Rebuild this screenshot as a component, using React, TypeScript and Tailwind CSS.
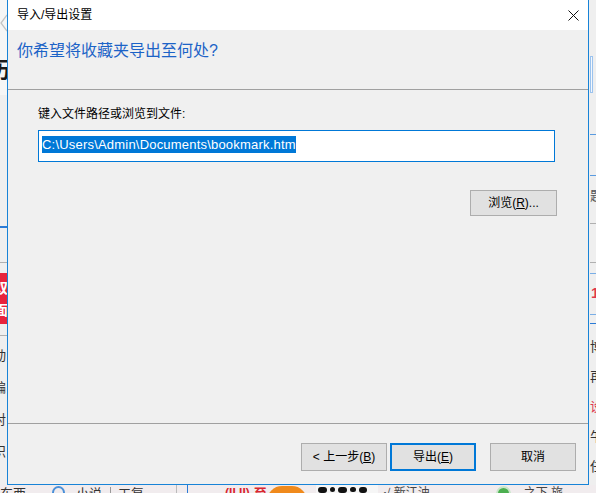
import React from 'react';

const font = "font-['Liberation_Sans','Noto_Sans_CJK_SC',sans-serif]";

// page behind the dialog, left edge
function LeftStrip() {
    return (
        <div className="w-[7px] h-[485px] overflow-hidden flex flex-col bg-[#efefef] shrink-0">
            <div className="h-[95px] bg-[#f6f6f6] flex flex-col pt-[14px]">
                <svg width="7" height="18" viewBox="0 0 7 18">
                    <path d="M7 1 L1 9 L7 17" stroke="#c4c4c4" strokeWidth="1.3" fill="none" />
                </svg>
                <span className="mt-[26px] ml-[-12px] text-[22px] leading-[26px] font-bold text-[#1a1a1a]">历</span>
            </div>
            <div className="mt-[131px] h-[2px] bg-[#2b7bd6]" />
            <div className="mt-[34px] h-px bg-[#b0b0b0]" />
            <div className="mt-[10px] h-[51px] bg-[#e8243c] flex flex-col pt-[6px] gap-[4px] text-[14px] leading-[18px] font-bold text-white">
                <span className="ml-[-6px]">双</span>
                <span className="ml-[-6px]">面</span>
            </div>
            <div className="mt-[11px] h-px bg-[#b0b0b0]" />
            <div className="mt-[12px] ml-[-7px] flex flex-col gap-[17px] text-[13px] leading-[15px] text-[#333]">
                <span>动</span>
                <span>编</span>
                <span>对</span>
                <span>识</span>
            </div>
        </div>
    );
}

// page behind the dialog, right edge
function RightStrip() {
    return (
        <div className="w-[7px] h-[485px] overflow-hidden flex flex-col bg-[#efefef] shrink-0 pl-px">
            <div className="mt-[56px] w-[3px] h-[37px] border border-[#9cc3ee] bg-[#f4f8fd]" />
            <div className="mt-[41px] h-px bg-[#5a9be0]" />
            <div className="mt-[40px] h-px bg-[#5a9be0]" />
            <span className="mt-[12px] text-[13px] leading-[15px] text-[#555]">题</span>
            <div className="mt-[20px] h-px bg-[#b0b0b0]" />
            <div className="mt-[38px] h-px bg-[#b0b0b0]" />
            <div className="mt-[10px] h-px bg-[#7aaee6]" />
            <span className="mt-[10px] ml-px text-[15px] leading-[18px] font-bold text-[#e0384e]">1</span>
            <div className="mt-[12px] h-px bg-[#7aaee6]" />
            <div className="mt-[8px] h-px bg-[#2b7bd6]" />
            <div className="mt-[15px] flex flex-col gap-[15px] text-[13px] leading-[15px] text-[#333]">
                <span>博</span>
                <span>再</span>
                <span className="text-[#e0384e]">设</span>
                <span>午</span>
                <span>任</span>
            </div>
        </div>
    );
}

// page behind the dialog, bottom edge
function BottomStrip() {
    return (
        <div className="h-[8px] bg-[#f1ecee] overflow-hidden flex items-start pt-px text-[13px] leading-[15px] text-[#333]">
            <span>东西</span>
            <div className="ml-[26px] w-[13px] h-[13px] rounded-full border-2 border-[#4a90d9] shrink-0" />
            <span className="ml-[11px]">小说</span>
            <div className="ml-[8px] mt-px w-px h-[8px] bg-[#999] shrink-0" />
            <span className="ml-[7px]">工复</span>
            <div className="ml-[32px] mt-[-1px] w-px h-[8px] bg-[#bbb] shrink-0" />
            <div className="ml-[10px] mt-[-1px] w-px h-[8px] bg-[#2b7bd6] shrink-0" />
            <span className="ml-[37px] text-[12px] leading-[14px] font-bold text-[#d9262f]">(II.II)</span>
            <span className="ml-[4px] font-bold text-[#d9262f]">至</span>
            <div className="w-[40px] h-[30px] rounded-full bg-[#f08a1c] shrink-0" />
            <div className="ml-[9px] mt-[-1px] w-[62px] h-[8px] bg-[#f6f6f6] shrink-0 flex gap-[3px] pt-[2px] pl-[2px]">
                <div className="w-[9px] h-[6px] rounded-full bg-[#111]" />
                <div className="w-[5px] h-[5px] rounded-full bg-[#111]" />
                <div className="w-[9px] h-[6px] rounded-full bg-[#111]" />
                <div className="w-[6px] h-[5px] rounded-full bg-[#111]" />
                <div className="w-[8px] h-[6px] rounded-full bg-[#111]" />
            </div>
            <span className="ml-[6px] text-[12px] leading-[14px] text-[#444] whitespace-nowrap">√ 新江油</span>
            <div className="ml-[66px] w-[15px] h-[15px] rounded-full bg-[#4caf50] border-2 border-[#c8e6c9] shrink-0" />
            <span className="ml-[13px] text-[12px] leading-[14px] text-[#444] whitespace-nowrap">之下 旅</span>
        </div>
    );
}

function Btn({ children, primary }: { children: React.ReactNode; primary?: boolean }) {
    return (
        <div
            className={`w-[86px] h-[28px] flex items-center justify-center bg-[#e1e1e1] text-[12px] text-[#000] ${
                primary ? 'border-2 border-[#0078d7]' : 'border border-[#adadad]'
            }`}
        >
            {children}
        </div>
    );
}

function Dialog() {
    return (
        <div className="mt-[-1px] w-[582px] h-[486px] shrink-0 border border-[#1883d7] bg-[#f0f0f0] flex flex-col">
            {/* title bar */}
            <div className="h-[30px] bg-white flex items-center justify-between pl-[9px] pr-[9px]">
                <span className="text-[12px] leading-[16px] text-black">导入/导出设置</span>
                <svg width="11" height="11" viewBox="0 0 11 11">
                    <path d="M0.5 0.5 L10.5 10.5 M10.5 0.5 L0.5 10.5" stroke="#111" strokeWidth="1" />
                </svg>
            </div>

            {/* header */}
            <div className="h-[59px] pl-[9px] pt-[9px]">
                <span className="text-[16px] leading-[22px] text-[#1c63c7]">你希望将收藏夹导出至何处?</span>
            </div>
            <div className="h-px bg-[#a0a0a0]" />

            {/* body */}
            <div className="h-[333px] flex flex-col pt-[16px] pl-[30px] pr-[31px]">
                <div className="text-[12px] leading-[16px] text-black">键入文件路径或浏览到文件:</div>
                <div className="mt-[8px] w-[517px] h-[32px] border border-[#0078d7] bg-white pt-px pl-[3px]">
                    <span className="inline-block bg-[#0078d7] text-white text-[13px] leading-[17px] tracking-[0.2px] font-['Liberation_Sans',sans-serif]">
                        C:\Users\Admin\Documents\bookmark.htm
                    </span>
                </div>
                <div className="mt-[28px] self-end w-[87px] h-[26px] flex items-center justify-center bg-[#e1e1e1] border border-[#adadad] text-[12px] text-black">
                    浏览(<span className="underline">R</span>)...
                </div>
            </div>
            <div className="h-px bg-[#a0a0a0]" />

            {/* footer */}
            <div className="flex-1 flex items-start justify-end pt-[19px] pr-[12px]">
                <Btn>&lt; 上一步(<span className="underline">B</span>)</Btn>
                <div className="w-[3px]" />
                <Btn primary>导出(<span className="underline">E</span>)</Btn>
                <div className="w-[14px]" />
                <Btn>取消</Btn>
            </div>
        </div>
    );
}

export default function App() {
    return (
        <div className={`w-[596px] h-[493px] overflow-hidden flex flex-col bg-[#efefef] ${font}`}>
            <div className="h-[485px] flex items-start">
                <LeftStrip />
                <Dialog />
                <RightStrip />
            </div>
            <BottomStrip />
        </div>
    );
}
